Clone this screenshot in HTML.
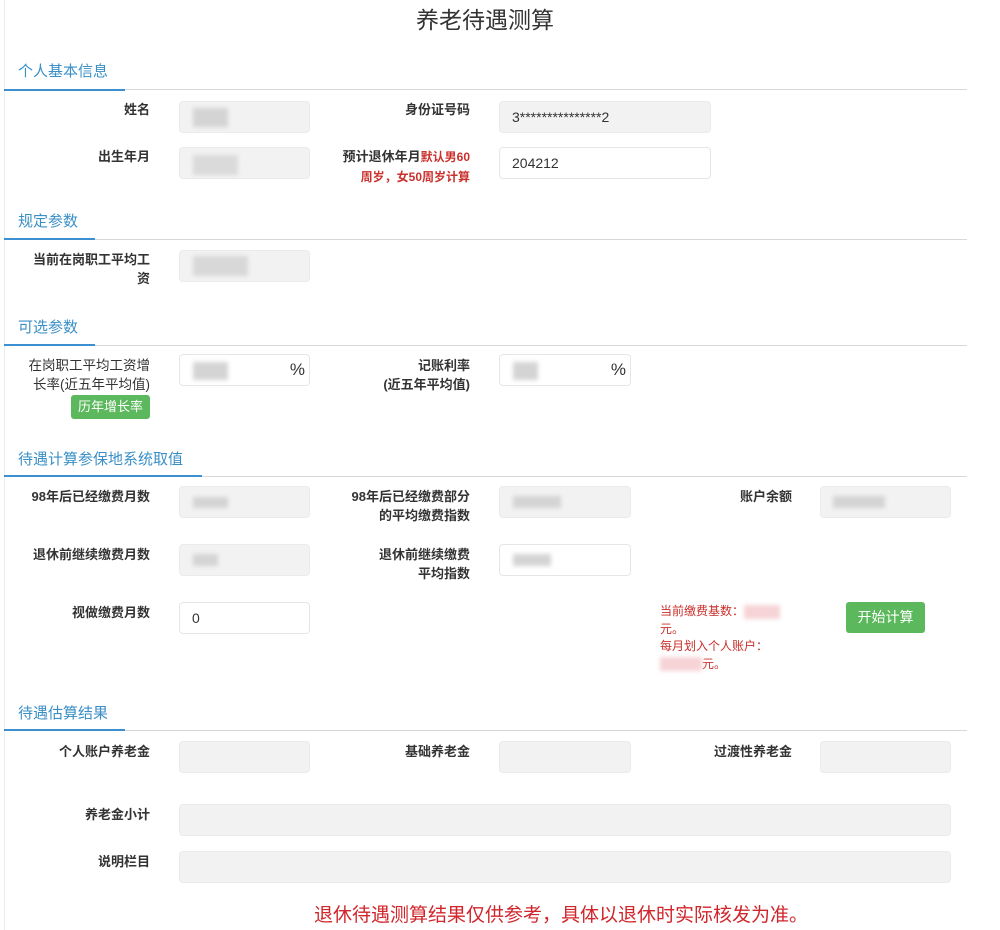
<!DOCTYPE html>
<html><head><meta charset="utf-8"><style>
*{margin:0;padding:0;box-sizing:border-box}
body{width:1000px;height:930px;background:#fff;position:relative;overflow:hidden;font-family:"Liberation Sans","Noto Sans CJK SC",sans-serif;color:#333}
.a{position:absolute}
.lb{position:absolute;font-size:13px;font-weight:bold;text-align:right;line-height:19px;color:#333}
.in{position:absolute;height:32px;border-radius:4px;border:1px solid #eceaea;background:#f3f2f2;font-size:14px;padding:7px 12px;color:#333}
.w{background:#fff;border-color:#e6e6e6}
.sec{position:absolute;left:18px;font-size:15px;color:#3a8fc7}
.hl{position:absolute;left:4px;height:1px;width:963px;background:#d8d8d8}
.bl{position:absolute;left:4px;height:2px;background:#3c8fd0}
.blur{position:absolute;background:#d4d4d4;filter:blur(2px)}
.btn{position:absolute;background:#5cb85c;color:#fff;border-radius:3px;text-align:center}
.red{color:#c9302c}
</style></head><body>
<div class="a" style="left:4px;top:0;width:1px;height:930px;background:#ececec"></div>
<div class="a" style="left:0;width:970px;top:1px;text-align:center;font-size:23px;color:#333">养老待遇测算</div>

<div class="sec" style="top:60px">个人基本信息</div><div class="hl" style="top:89px"></div><div class="bl" style="top:89px;width:121px"></div>
<div class="lb" style="left:40px;width:110px;top:100px">姓名</div>
<div class="in" style="left:179px;top:101px;width:131px"></div><div class="blur" style="left:193px;top:108px;width:35px;height:19px"></div>
<div class="lb" style="left:340px;width:130px;top:100px">身份证号码</div>
<div class="in" style="left:499px;top:101px;width:212px">3***************2</div>
<div class="lb" style="left:40px;width:110px;top:147px">出生年月</div>
<div class="in" style="left:179px;top:147px;width:131px"></div><div class="blur" style="left:193px;top:155px;width:45px;height:20px;background:#dadada"></div>
<div class="lb" style="left:300px;width:170px;top:147px">预计退休年月<span class="red" style="font-size:12px">默认男60</span><br><span class="red" style="font-size:12px">周岁，女50周岁计算</span></div>
<div class="in w" style="left:499px;top:147px;width:212px">204212</div>

<div class="sec" style="top:210px">规定参数</div><div class="hl" style="top:239px"></div><div class="bl" style="top:238px;width:91px"></div>
<div class="lb" style="left:20px;width:130px;top:250px">当前在岗职工平均工<br>资</div>
<div class="in" style="left:179px;top:250px;width:131px"></div><div class="blur" style="left:193px;top:256px;width:55px;height:20px;background:#d8d8d8"></div>

<div class="sec" style="top:316px">可选参数</div><div class="hl" style="top:345px"></div><div class="bl" style="top:344px;width:91px"></div>
<div class="lb" style="left:20px;width:130px;top:356px;font-weight:normal;font-size:13.5px">在岗职工平均工资增<br>长率(近五年平均值)</div>
<div class="btn" style="left:71px;top:395px;width:79px;height:24px;font-size:13px;line-height:24px">历年增长率</div>
<div class="in w" style="left:179px;top:354px;width:131px;text-align:right;font-size:17px;padding:5px 4px">%</div><div class="blur" style="left:193px;top:362px;width:35px;height:18px"></div>
<div class="lb" style="left:340px;width:130px;top:356px">记账利率<br>(近五年平均值)</div>
<div class="in w" style="left:499px;top:354px;width:132px;text-align:right;font-size:17px;padding:5px 4px">%</div><div class="blur" style="left:513px;top:362px;width:25px;height:18px"></div>

<div class="sec" style="top:448px">待遇计算参保地系统取值</div><div class="hl" style="top:476px"></div><div class="bl" style="top:475px;width:198px"></div>
<div class="lb" style="left:20px;width:130px;top:487px">98年后已经缴费月数</div>
<div class="in" style="left:179px;top:486px;width:131px"></div><div class="blur" style="left:193px;top:497px;width:35px;height:11px"></div>
<div class="lb" style="left:320px;width:150px;top:487px">98年后已经缴费部分<br>的平均缴费指数</div>
<div class="in" style="left:499px;top:486px;width:132px"></div><div class="blur" style="left:513px;top:496px;width:48px;height:12px"></div>
<div class="lb" style="left:660px;width:132px;top:487px">账户余额</div>
<div class="in" style="left:820px;top:486px;width:131px"></div><div class="blur" style="left:833px;top:496px;width:52px;height:12px"></div>
<div class="lb" style="left:20px;width:130px;top:545px">退休前继续缴费月数</div>
<div class="in" style="left:179px;top:544px;width:131px"></div><div class="blur" style="left:193px;top:554px;width:25px;height:12px"></div>
<div class="lb" style="left:320px;width:150px;top:545px">退休前继续缴费<br>平均指数</div>
<div class="in w" style="left:499px;top:544px;width:132px"></div><div class="blur" style="left:513px;top:554px;width:38px;height:12px"></div>
<div class="lb" style="left:20px;width:130px;top:603px">视做缴费月数</div>
<div class="in w" style="left:179px;top:602px;width:131px">0</div>
<div class="a red" style="left:660px;top:603px;font-size:12px;line-height:17.5px;width:150px">当前缴费基数：<span style="display:inline-block;width:36px;height:14px;background:#f6d3d6;filter:blur(2px);vertical-align:middle"></span><br>元。<br>每月划入个人账户：<br><span style="display:inline-block;width:42px;height:14px;background:#f6d3d6;filter:blur(2px);vertical-align:middle"></span>元。</div>
<div class="btn" style="left:846px;top:602px;width:79px;height:31px;font-size:14px;line-height:31px">开始计算</div>

<div class="sec" style="top:702px">待遇估算结果</div><div class="hl" style="top:730px"></div><div class="bl" style="top:729px;width:121px"></div>
<div class="lb" style="left:20px;width:130px;top:742px">个人账户养老金</div>
<div class="in" style="left:179px;top:741px;width:131px"></div>
<div class="lb" style="left:340px;width:130px;top:742px">基础养老金</div>
<div class="in" style="left:499px;top:741px;width:132px"></div>
<div class="lb" style="left:660px;width:132px;top:742px">过渡性养老金</div>
<div class="in" style="left:820px;top:741px;width:131px"></div>
<div class="lb" style="left:20px;width:130px;top:805px">养老金小计</div>
<div class="in" style="left:179px;top:804px;width:772px"></div>
<div class="lb" style="left:20px;width:130px;top:852px">说明栏目</div>
<div class="in" style="left:179px;top:851px;width:772px"></div>
<div class="a red" style="left:0;width:1122px;text-align:center;top:900px;font-size:19px;color:#d0262b">退休待遇测算结果仅供参考，具体以退休时实际核发为准。</div>
</body></html>
